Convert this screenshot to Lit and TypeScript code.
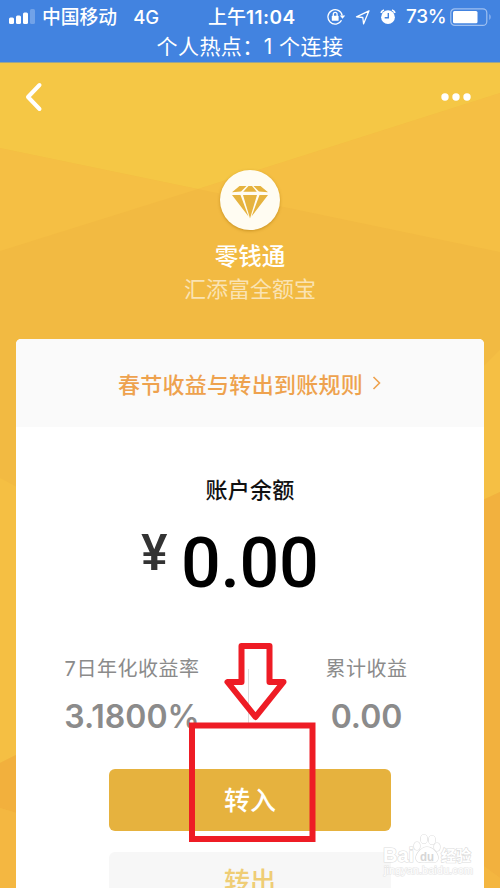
import { LitElement, html, css, svg } from "lit";
import { customElement } from "lit/decorators.js";

@customElement("status-bar")
class StatusBar extends LitElement {
  static styles = css`
    :host { display: block; flex: none; height: 62px; background: #4283e0; color: #fff; border-bottom: 1px solid #9da58b; box-sizing: content-box; }
    .row { display: grid; grid-template-columns: 208px 119px 1fr; height: 32px; align-items: center; font-size: 19px; line-height: 32px; white-space: nowrap; }
    .left { display: flex; align-items: center; padding-left: 9px; }
    .carrier { font-size: 18.8px; margin-left: 6px; padding-top: 2px; font-weight: 500; }
    .net { margin-left: 16px; font-weight: 500; font-size: 18.5px; }
    .time { font-weight: 600; font-size: 19px; letter-spacing: 0.45px; padding-top: 1px; }
    .time b { font-weight: 500; letter-spacing: 0; }
    .right { display: flex; align-items: center; }
    .pct { font-weight: 500; font-size: 19px; margin-left: 9px; width: 44px; letter-spacing: -0.3px; }
    .hotspot { height: 28px; line-height: 29px; text-align: center; font-size: 21px; letter-spacing: 0.45px; font-weight: 400; white-space: pre; }
    svg { display: block; flex: none; }
  `;
  render() {
    return html`
      <div class="row">
        <div class="left">
          <svg width="27" height="18" viewBox="0 0 27 18" fill="#fff">
            <rect x="0" y="9.500" width="5" height="6.500" rx="1.500" /><rect x="7" y="7.500" width="5" height="8.500" rx="1.500" />
            <rect x="14" y="4.500" width="5" height="11.500" rx="1.500" /><rect x="21" y="1" width="5" height="15" rx="1.500" opacity=".25" />
          </svg>
          <span class="carrier">中国移动</span><span class="net">4G</span>
        </div>
        <div class="time"><b>上午</b>11:04</div>
        <div class="right">
          <svg width="70" height="20" viewBox="327 6 70 20" fill="none" stroke="#fff">
            <path d="M341.500 19.300A7.200 7.200 0 1 1 342.200 14.500" stroke-width="1.300" />
            <path d="M339.800 14.500h5.400l-2.700 3.200z" fill="#fff" stroke="none" />
            <rect x="331.800" y="14.800" width="6.800" height="5" rx=".6" fill="#fff" stroke="none" />
            <path d="M333.300 15v-1.700a1.900 1.900 0 0 1 3.800 0V15" stroke-width="1.300" />
            <path d="M369 9.800 356.500 15.800 362.800 16.500 363.600 22.800Z" stroke-width="1.300" stroke-linejoin="round" />
            <circle cx="388" cy="16.200" r="6.900" fill="#fff" stroke="none" />
            <path d="M388.300 12v4.700h-3.600" stroke="#4283e0" stroke-width="1.400" />
            <path d="M381 11.800a5 5 0 0 1 3-2.800M395 11.800a5 5 0 0 0-3-2.800" stroke-width="1.800" />
          </svg>
          <span class="pct">73%</span>
          <svg width="42" height="20" viewBox="0 0 42 20" fill="none">
            <rect x=".8" y="1.800" width="36" height="16.600" rx="4" stroke="#9fc0f0" stroke-width="1.200" />
            <rect x="3" y="4" width="24.500" height="12.200" rx="1.500" fill="#fff" />
            <path d="M39 7q2 1 2 3t-2 3z" fill="#7da9ec" />
          </svg>
        </div>
      </div>
      <div class="hotspot">个人热点：1 个连接</div>
    `;
  }
}

@customElement("fund-card")
class FundCard extends LitElement {
  static styles = css`
    :host { display: flex; flex-direction: column; align-items: center; background: #fff; border-radius: 5px 5px 0 0; overflow: hidden; }
    :host > * { flex: none; }
    .notice { width: 100%; height: 88px; background: #fafafa; display: flex; align-items: center; justify-content: center; color: #eea24e; font-size: 22px; font-weight: 500; letter-spacing: 0.28px; }
    .notice svg { margin-left: 9px; }
    .caption { margin-top: 47px; height: 32px; line-height: 32px; font-size: 22px; letter-spacing: 0.3px; font-weight: 500; color: #111; }
    .amount { display: flex; align-items: flex-start; height: 90px; margin-top: 12px; margin-right: 42px; color: #000; font-family: Roboto, sans-serif; }
    .yen { font-size: 51px; line-height: 56px; font-weight: 700; color: #333; font-family: "Liberation Sans", sans-serif; margin-right: 13px; margin-top: 7px; transform: scaleX(0.92); }
    .num { font-size: 70px; line-height: 90px; font-weight: 500; letter-spacing: -0.4px; }
    .stats { display: grid; grid-template-columns: 232px 1px 235px; width: 468px; margin-top: 46px; height: 92px; color: #8b8b8b; text-align: center; }
    .label { font-size: 20px; line-height: 30px; letter-spacing: 0.5px; }
    .value { font-family: Inter, sans-serif; font-weight: 600; font-size: 32px; line-height: 40px; margin-top: 13px; white-space: nowrap; }
    .rule { background: #dcdcdc; margin-top: 15px; height: 58px; }
    .btn { width: 282px; height: 62px; line-height: 63px; border-radius: 6px; font-size: 26px; text-align: center; font-weight: 500; }
    .primary { margin-top: 23px; background: #e6b23e; color: #fff; }
    .secondary { margin-top: 21px; background: #f7f7f7; color: #efcd75; line-height: 59px; }
  `;
  render() {
    return html`
      <div class="notice">春节收益与转出到账规则
        <svg width="10" height="16" viewBox="0 0 10 16" fill="none" stroke="#eea24e" stroke-width="1.600"><path d="M1.500 2 7.500 8 1.500 14" /></svg>
      </div>
      <div class="caption">账户余额</div>
      <div class="amount"><span class="yen">¥</span><span class="num">0.00</span></div>
      <div class="stats">
        <div><div class="label">7日年化收益率</div><div class="value">3.1800%</div></div>
        <div class="rule"></div>
        <div><div class="label">累计收益</div><div class="value">0.00</div></div>
      </div>
      <div class="btn primary">转入</div>
      <div class="btn secondary">转出</div>
    `;
  }
}

const facets = svg`
  <path d="M0 0H500V888H0z" fill="#f2ba42" />
  <path d="M0 86V189L198 127z" fill="#f5bf44" />
  <path d="M500 31V190L198 127z" fill="#f5bf44" />
  <path d="M0 0H500V31L198 127 0 86z" fill="#f5c745" />
  <path d="M0 416 30 432V686L0 701z" fill="#f5bf43" />
  <path d="M0 701 30 686V755L0 746z" fill="#f2b03d" />
  <path d="M0 746 30 755V830H0z" fill="#f4b741" />
  <path d="M500 288 470 318V444L500 430z" fill="#f5bf44" />
  <path d="M500 430 470 444V794L500 816z" fill="#f2b13e" />
  <path d="M500 816 470 794V830H500z" fill="#f4b640" />
`;

@customElement("app-root")
class AppRoot extends LitElement {
  static styles = css`
    :host { display: block; position: relative; width: 500px; height: 888px; overflow: hidden; font-family: Inter, "Noto Sans CJK SC", sans-serif; background: #f2ba42; }
    .page { position: relative; display: flex; flex-direction: column; height: 825px; overflow: hidden; }
    .facets { position: absolute; inset: 0; }
    .nav { position: relative; display: flex; justify-content: space-between; align-items: center; height: 68px; padding: 0 28px 0 24px; }
    .brand { position: relative; display: flex; flex-direction: column; align-items: center; height: 208px; }
    .badge { width: 60px; height: 60px; margin-top: 39px; border-radius: 50%; background: #fffcf2; box-shadow: 0 1px 3px rgba(160, 105, 0, 0.5); }
    .name { margin-top: 10px; height: 33px; line-height: 34px; font-size: 23.5px; font-weight: 500; color: #fff; }
    .fund { height: 32px; line-height: 32px; font-size: 22px; color: #fae3b3; }
    fund-card { position: relative; width: 468px; height: 560px; margin-left: 16px; flex: none; }
    .nav, .brand { flex: none; }
    svg { display: block; }
    .marks { position: absolute; left: 0; top: 0; }
    .wm { font-family: "Liberation Sans", "Noto Sans CJK SC", sans-serif; }
  `;
  render() {
    return html`
      <status-bar></status-bar>
      <div class="page">
        <svg class="facets" width="500" height="826" viewBox="0 1 500 826">${facets}</svg>
        <div class="nav">
          <svg width="20" height="30" viewBox="0 0 20 30" fill="none" stroke="#fff" stroke-width="4" stroke-linecap="round" stroke-linejoin="round"><path d="M15.500 3 4 15 15.500 27" /></svg>
          <svg width="32" height="10" viewBox="0 0 32 10" fill="#fff"><circle cx="5" cy="5" r="3.700" /><circle cx="16" cy="5" r="3.700" /><circle cx="27" cy="5" r="3.700" /></svg>
        </div>
        <div class="brand">
          <div class="badge">
            <svg width="60" height="60" viewBox="0 0 60 60" fill="#e6b33e">
              <path d="M19.500 16H26.500L21 21.500 12 22.300zM28.500 16H32L36.800 21.800H23.200zM33.500 16H40.500L48 22.300 39 21.500z" />
              <path d="M12 25H20.500L28.500 46.500zM23 25H37L30 48.500zM39.500 25H48L31.500 46.500z" />
            </svg>
          </div>
          <div class="name">零钱通</div>
          <div class="fund">汇添富全额宝</div>
        </div>
        <fund-card></fund-card>
      </div>
      <svg class="marks" width="500" height="888" viewBox="0 0 500 888" fill="none">
        <path d="M241.500 646H269.500V682H283.500L255.500 717 227.500 682H241.500z" stroke="#ee1c25" stroke-width="6" stroke-linejoin="round" />
        <rect x="192" y="725.500" width="120.500" height="113.500" stroke="#ee1c25" stroke-width="6" />
        <g class="wm" fill="#fff" stroke="#dcdcdc" stroke-width="1.200" paint-order="stroke">
          <text x="383" y="862" font-size="21" font-weight="700" textLength="31" lengthAdjust="spacingAndGlyphs">Bai</text>
          <ellipse cx="417" cy="846" rx="3" ry="4" /><ellipse cx="424" cy="839" rx="3.300" ry="4.500" />
          <ellipse cx="432" cy="840" rx="3.300" ry="4.500" /><ellipse cx="437" cy="847" rx="3" ry="4" />
          <path d="M427 847C421 847 415 855 416 859S421 863 427 862 437 864 438 859 433 847 427 847z" />
          <text x="420" y="860.500" font-size="12" font-weight="700" textLength="14" lengthAdjust="spacingAndGlyphs" fill="#d6d6d6" stroke="none">du</text>
          <text x="441" y="861" font-size="15" font-weight="700" textLength="30">经验</text>
          <text x="384" y="874" font-size="10.500" stroke="#e6e6e6" textLength="89" lengthAdjust="spacingAndGlyphs">jingyan.baidu.com</text>
        </g>
      </svg>
    `;
  }
}
